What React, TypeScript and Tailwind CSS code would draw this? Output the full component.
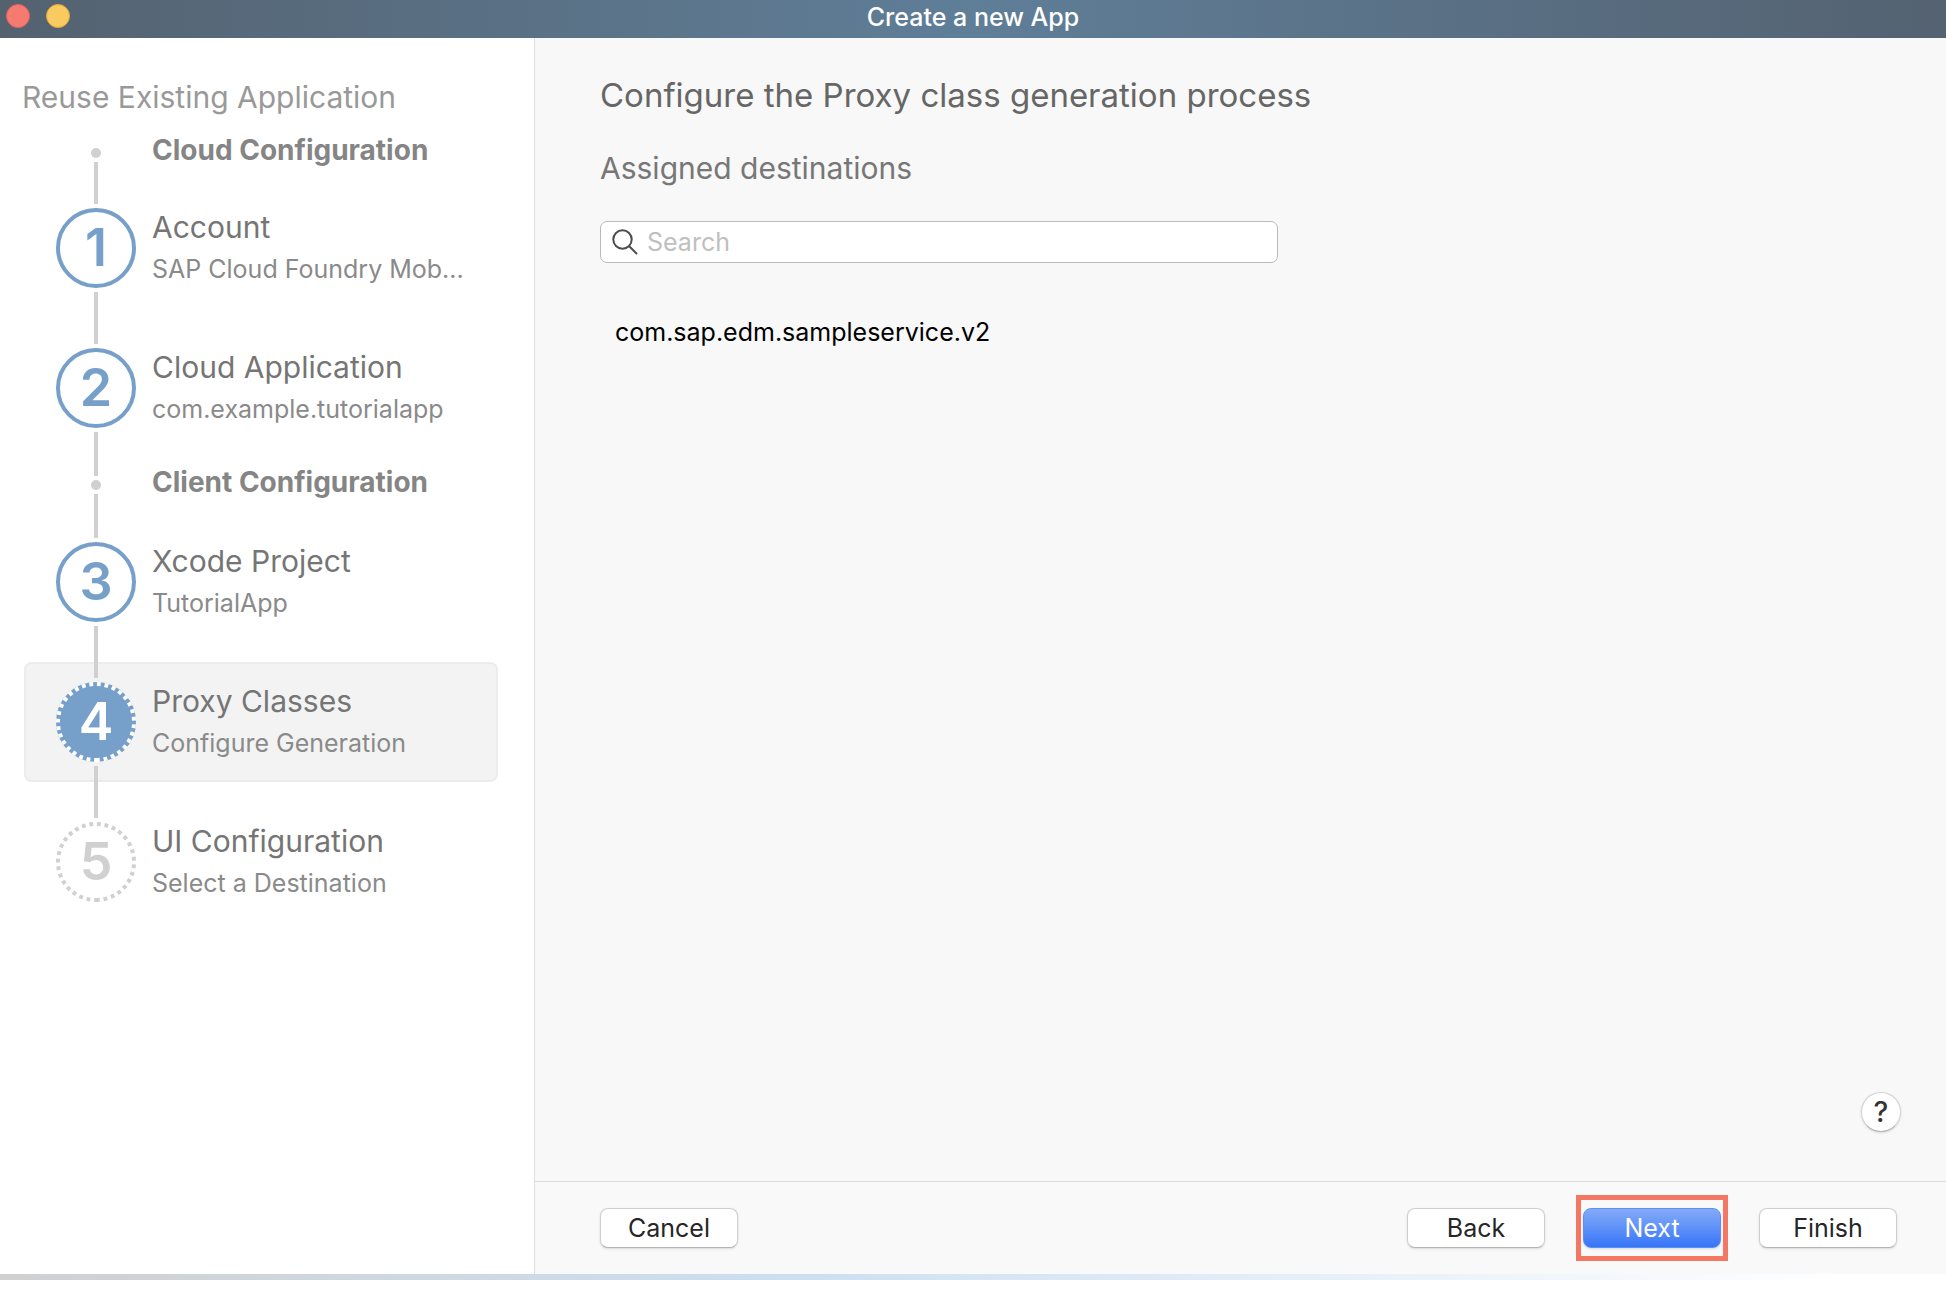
import { Fragment } from "react";

type Step = { kind: "step"; n: number; title: string; sub: string; state: "done" | "active" | "todo" };
type Group = { kind: "group"; title: string };

const items: (Step | Group)[] = [
  { kind: "group", title: "Cloud Configuration" },
  { kind: "step", n: 1, title: "Account", sub: "SAP Cloud Foundry Mob...", state: "done" },
  { kind: "step", n: 2, title: "Cloud Application", sub: "com.example.tutorialapp", state: "done" },
  { kind: "group", title: "Client Configuration" },
  { kind: "step", n: 3, title: "Xcode Project", sub: "TutorialApp", state: "done" },
  { kind: "step", n: 4, title: "Proxy Classes", sub: "Configure Generation", state: "active" },
  { kind: "step", n: 5, title: "UI Configuration", sub: "Select a Destination", state: "todo" },
];

// Ring drawn from the bottom of the badge, counter-clockwise.
const ring = "M40 78 A38 38 0 0 0 40 2 A38 38 0 0 0 40 78";

function Line({ className }: { className: string }) {
  return <div className={`w-1 shrink-0 bg-[#d0d0d0] ${className}`} />;
}

function Badge({ n, state }: { n: number; state: Step["state"] }) {
  const text = state === "done" ? "text-[#76a0c9]" : state === "active" ? "text-white" : "text-[#d0d0d0]";
  return (
    <div className={`grid size-20 shrink-0 place-items-center text-[52px] leading-none font-semibold ${text}`}>
      <svg viewBox="0 0 80 80" className="col-start-1 row-start-1 size-20" fill="none" strokeWidth="4" aria-hidden="true">
        {state === "done" && <circle cx="40" cy="40" r="38" stroke="#76a0c9" />}
        {state === "active" && (
          <>
            <circle cx="40" cy="40" r="38" fill="#76a0c9" stroke="#76a0c9" />
            <path d={ring} stroke="#ffffff" pathLength="250" strokeDasharray="4 4" />
          </>
        )}
        {state === "todo" && <path d={ring} stroke="#d0d0d0" pathLength="250" strokeDasharray="4 4" />}
      </svg>
      <span className="col-start-1 row-start-1">{n}</span>
    </div>
  );
}

function StepRow({ step, last }: { step: Step; last: boolean }) {
  const active = step.state === "active";
  return (
    <li
      aria-current={active ? "step" : undefined}
      className={`flex h-[120px] rounded-lg pl-8 ${active ? "bg-[#f3f3f3] ring-2 ring-[#ececec] ring-inset" : ""}`}
    >
      <div className="flex w-20 shrink-0 flex-col items-center gap-1">
        <Line className="h-4" />
        <Badge n={step.n} state={step.state} />
        {!last && <Line className="h-4" />}
      </div>
      <div className="flex-1 pt-5 pl-4">
        <div className="text-[30px] leading-[38px] text-[#757575]">{step.title}</div>
        <div className="mt-1 text-[25px] leading-[38px] whitespace-nowrap text-[#8a8a8a]">{step.sub}</div>
      </div>
    </li>
  );
}

function GroupRow({ title, first }: { title: string; first: boolean }) {
  return (
    <li className={`flex pl-8 ${first ? "h-10" : "h-[74px]"}`}>
      <div className="flex w-20 shrink-0 flex-col items-center gap-1">
        {!first && <Line className="h-7" />}
        <div className="size-[10px] shrink-0 rounded-full bg-[#d0d0d0]" />
        <Line className={first ? "h-[26px]" : "h-7"} />
      </div>
      <h3 className={`pl-4 text-[28px] leading-9 font-bold text-[#858585] ${first ? "-mt-4" : "mt-4"}`}>{title}</h3>
    </li>
  );
}

const plainButton =
  "h-10 w-[138px] rounded-lg border border-[#cfcfcf] border-b-[#b5b5b5] bg-white text-[25px] leading-none text-[#262626] shadow-sm";

export default function App() {
  return (
    <div className="flex min-h-screen flex-col bg-white font-['Inter',sans-serif]">
      <header className="grid h-[38px] grid-cols-[1fr_auto_1fr] bg-linear-to-r from-[#546270] via-[#5f7e98] to-[#546271]">
        <div className="flex gap-4 pt-1 pl-[6px]">
          <button aria-label="Close" className="size-6 rounded-full border border-[#e0625a] bg-[#f57b70]" />
          <button aria-label="Minimize" className="size-6 rounded-full border border-[#e0a83f] bg-[#f8ca5f]" />
        </div>
        <h1 className="text-[25px] leading-[34px] font-medium text-white">Create a new App</h1>
      </header>

      <div className="flex flex-1">
        <aside className="w-[535px] shrink-0 border-r border-[#dedede] bg-white pr-9 pl-6">
          <h2 className="-ml-[2px] pt-10 text-[30px] leading-[38px] text-[#999999]">Reuse Existing Application</h2>
          <ol className="mt-8">
            {items.map((item, i) => {
              const next = items[i + 1];
              return (
                <Fragment key={item.title}>
                  {item.kind === "group" ? (
                    <GroupRow title={item.title} first={i === 0} />
                  ) : (
                    <StepRow step={item} last={!next} />
                  )}
                  {item.kind === "step" && next?.kind === "step" && (
                    <li aria-hidden="true" className="flex h-5 pl-[70px]">
                      <Line className="h-5" />
                    </li>
                  )}
                </Fragment>
              );
            })}
          </ol>
        </aside>

        <main className="flex flex-1 flex-col bg-[#f8f8f8]">
          <section className="flex flex-1 flex-col px-[65px] pt-9">
            <h2 className="text-[33px] leading-[42px] text-[#666666]">Configure the Proxy class generation process</h2>
            <h3 className="mt-8 text-[30px] leading-10 text-[#777777]">Assigned destinations</h3>
            <label className="mt-[33px] flex h-[42px] w-full max-w-[678px] items-center rounded-[7px] border border-[#bababa] bg-white pl-[11px]">
              <svg viewBox="0 0 26 26" className="size-[26px]" fill="none" stroke="#4c4c4c" strokeWidth="2" aria-hidden="true">
                <circle cx="10.5" cy="10.5" r="9.2" />
                <path d="M17 17 L25 25" />
              </svg>
              <input
                type="search"
                aria-label="Search"
                placeholder="Search"
                className="ml-[9px] min-w-0 flex-1 bg-transparent text-[25px] leading-8 text-black outline-none placeholder:text-[#bfbfbf]"
              />
            </label>
            <ul className="mt-[51px] pl-[15px] text-[25px] leading-9 text-black">
              <li>com.sap.edm.sampleservice.v2</li>
            </ul>
            <button
              aria-label="Help"
              className="mt-auto -mr-5 mb-[49px] size-10 self-end rounded-full border border-[#d2d2d2] border-b-[#b5b5b5] bg-white text-[28px] leading-none font-medium text-[#333333] shadow-sm"
            >
              ?
            </button>
          </section>
          <footer className="flex h-[93px] items-center justify-between border-t border-[#dddddd] bg-[#f9f9f9] pr-[49px] pl-[65px]">
            <button className={plainButton}>Cancel</button>
            <div className="flex items-center">
              <button className={plainButton}>Back</button>
              <div className="mx-[31px] border-[5px] border-[#f47764] px-[2px] py-2">
                <button className="block h-10 w-[138px] rounded-lg border border-[#5b8ff5] bg-linear-to-b from-[#84aaf7] to-[#3775f8] text-[25px] leading-none text-white shadow-sm">
                  Next
                </button>
              </div>
              <button className={plainButton}>Finish</button>
            </div>
          </footer>
        </main>
      </div>
      <div className="mb-5 h-[6px] bg-linear-to-r from-[#d0d0d0] via-[#cbdff1] via-40% to-white to-95%" />
    </div>
  );
}
